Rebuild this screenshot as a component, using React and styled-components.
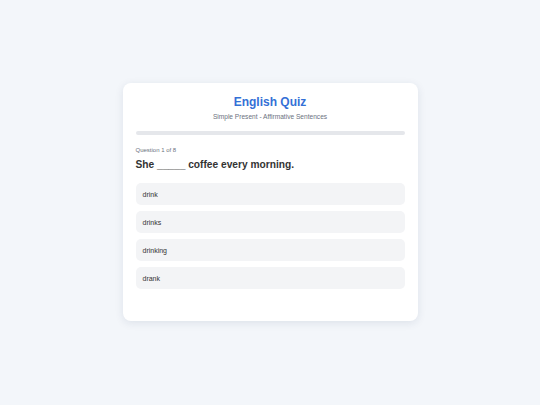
import React from "react";
import styled, { createGlobalStyle } from "styled-components";

const Global = createGlobalStyle`
  html, body { margin: 0; padding: 0; }
  body {
    background: #f3f6fa;
    font-family: "Liberation Sans", Arial, sans-serif;
    width: 540px;
    height: 405px;
  }
`;

const Page = styled.div`
  width: 540px;
  height: 405px;
  display: flex;
  justify-content: center;
  align-items: flex-start;
  padding-top: 83px;
  box-sizing: border-box;
`;

const Card = styled.div`
  width: 295px;
  box-sizing: border-box;
  background: #ffffff;
  border-radius: 8px;
  box-shadow: 0 2px 8px rgba(30, 50, 90, 0.1);
  padding: 11px 13px 32px;
  display: flex;
  flex-direction: column;
`;

const Title = styled.h1`
  margin: 0;
  text-align: center;
  font-size: 12px;
  line-height: 16px;
  font-weight: 700;
  color: #3470d6;
`;

const Subtitle = styled.p`
  margin: 2px 0 0;
  text-align: center;
  font-size: 6.6px;
  line-height: 9px;
  color: #6b7280;
`;

const Progress = styled.div`
  margin-top: 10px;
  height: 4px;
  border-radius: 2px;
  background: #e5e7eb;
  overflow: hidden;
`;

const ProgressFill = styled.div`
  height: 100%;
  background: #3470d6;
`;

const Counter = styled.div`
  margin-top: 11px;
  font-size: 6px;
  line-height: 8px;
  color: #6b7280;
`;

const Question = styled.div`
  margin-top: 4px;
  font-size: 10.2px;
  line-height: 14px;
  font-weight: 700;
  color: #333333;
`;

const Options = styled.div`
  margin-top: 11px;
  display: flex;
  flex-direction: column;
  gap: 6px;
`;

const Option = styled.div`
  height: 22px;
  border-radius: 5px;
  background: #f3f4f6;
  padding: 0 7px;
  display: flex;
  align-items: center;
  font-size: 7px;
  color: #333333;
`;

const options = ["drink", "drinks", "drinking", "drank"];

export default function App() {
  return (
    <>
      <Global />
      <Page>
        <Card>
          <Title>English Quiz</Title>
          <Subtitle>Simple Present - Affirmative Sentences</Subtitle>
          <Progress>
            <ProgressFill style={{ width: "0%" }} />
          </Progress>
          <Counter>Question 1 of 8</Counter>
          <Question>She _____ coffee every morning.</Question>
          <Options>
            {options.map((o) => (
              <Option key={o}>{o}</Option>
            ))}
          </Options>
        </Card>
      </Page>
    </>
  );
}
